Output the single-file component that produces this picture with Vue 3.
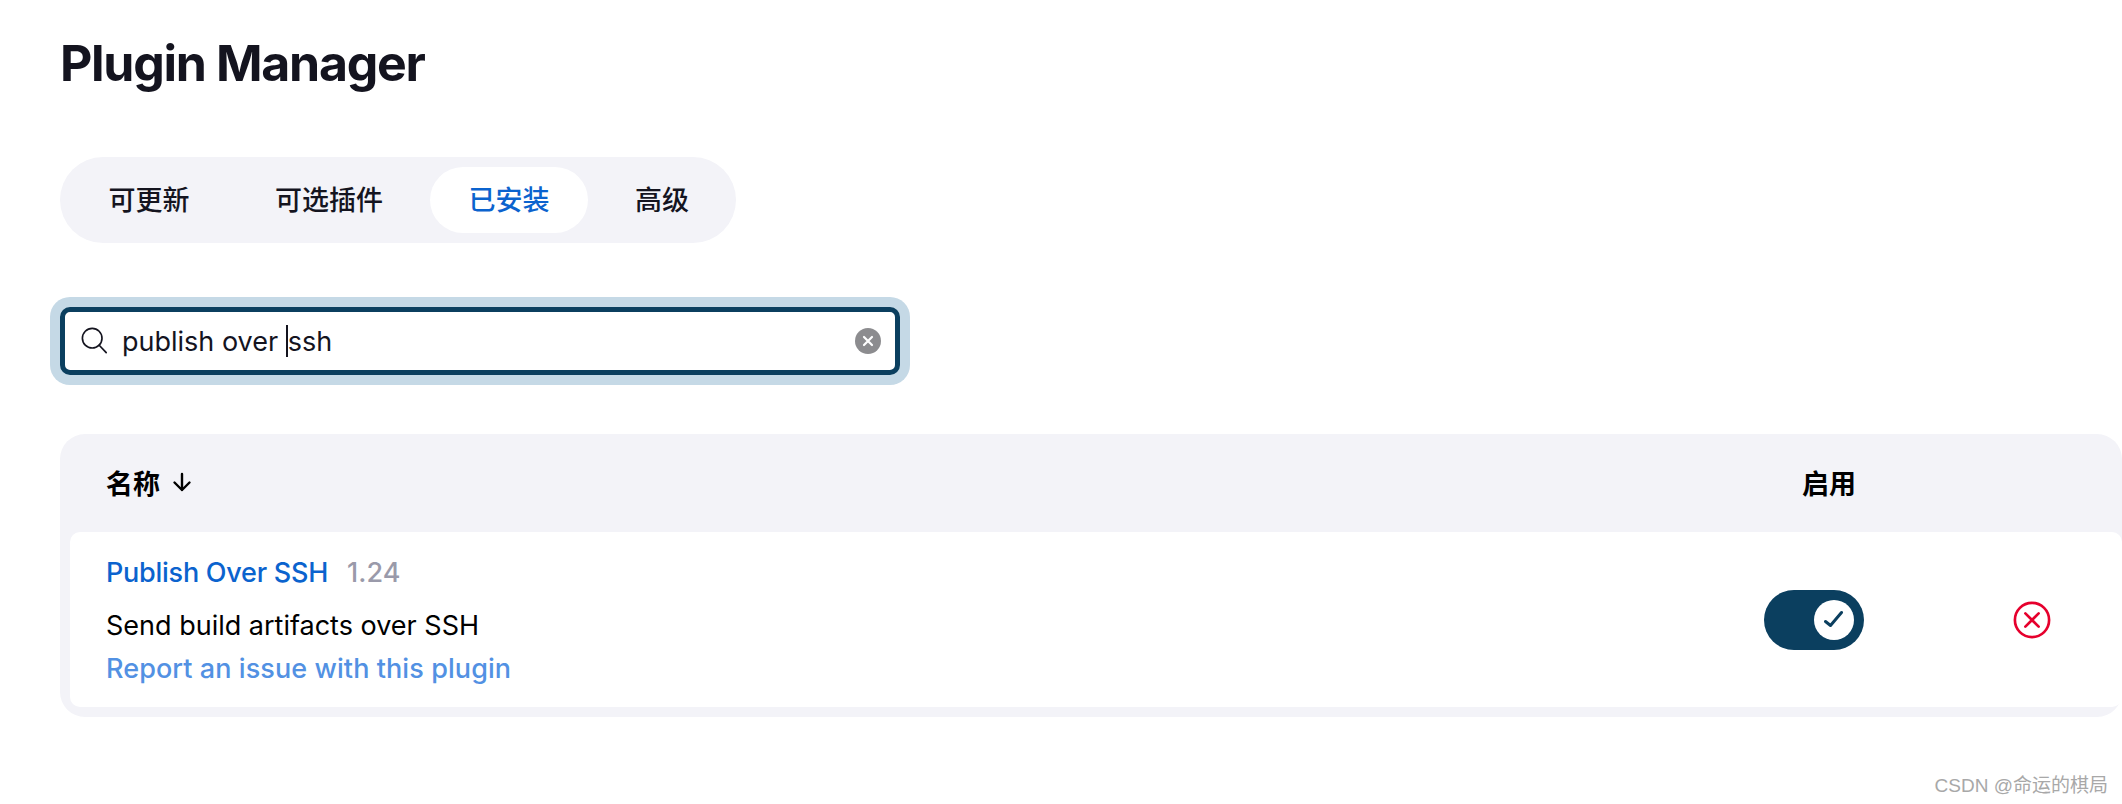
<template>
  <div class="page">
    <h1 class="title">Plugin Manager</h1>

    <div class="tabs">
      <a v-for="tab in tabs" :key="tab" class="tab" :class="{ active: tab === activeTab }">{{ tab }}</a>
    </div>

    <div class="search">
      <svg class="search-icon" viewBox="0 0 30 30" fill="none" stroke="#14141f" stroke-width="1.800" stroke-linecap="round">
        <circle cx="12" cy="12" r="10.500" />
        <path d="M19.500 19.500l7.500 8" />
      </svg>
      <div class="search-text">publish over <span class="caret"></span>ssh</div>
      <span class="clear">
        <svg viewBox="0 0 12 12" fill="none" stroke="#fff" stroke-width="2.200" stroke-linecap="round">
          <path d="M2 2l8 8M10 2l-8 8" />
        </svg>
      </span>
    </div>

    <div class="table">
      <div class="thead">
        <div class="th-name">
          名称
          <svg class="sort" viewBox="0 0 20 20" fill="none" stroke="#000" stroke-width="2.400" stroke-linecap="round" stroke-linejoin="round">
            <path d="M10 2v16M2.500 10.500l7.500 7.500 7.500-7.500" />
          </svg>
        </div>
        <div class="th-enabled">启用</div>
      </div>
      <div class="row">
        <div class="info">
          <div class="name-line">
            <a class="plugin-name">Publish Over SSH</a>
            <span class="version">1.24</span>
          </div>
          <div class="desc">Send build artifacts over SSH</div>
          <a class="report">Report an issue with this plugin</a>
        </div>
        <div class="toggle">
          <span class="knob">
            <svg viewBox="0 0 20 20" fill="none" stroke="#0b3f5f" stroke-width="3" stroke-linecap="round" stroke-linejoin="round">
              <path d="M1.500 11.500l5 4 11-13" />
            </svg>
          </span>
        </div>
        <svg class="remove" viewBox="0 0 40 40" fill="none" stroke="#e6002d" stroke-width="2.800" stroke-linecap="round">
          <circle cx="20" cy="20" r="18" />
          <path d="M13 13l14 14M27 13l-14 14" />
        </svg>
      </div>
    </div>

    <div class="watermark">CSDN @命运的棋局</div>
  </div>
</template>

<script setup>
const tabs = ['可更新', '可选插件', '已安装', '高级']
const activeTab = '已安装'
</script>

<style>
html, body {
  background: #fff;
  overflow: hidden;
}
</style>

<style scoped>
.page {
  position: relative;
  width: 2122px;
  height: 804px;
  padding: 32px 0 0 60px;
  box-sizing: border-box;
  overflow: hidden;
  font-family: Inter, "Noto Sans CJK SC", sans-serif;
  color: #000;
}

.title {
  margin: 0 0 62px;
  font-size: 50px;
  line-height: 63px;
  font-weight: 700;
  color: #14141f;
  letter-spacing: -1.300px;
}

.tabs {
  display: inline-flex;
  gap: 8.500px;
  padding: 10px 8px 10px 10px;
  height: 86px;
  box-sizing: border-box;
  background: #f3f3f8;
  border-radius: 43px;
}

.tab {
  padding: 0 38.500px;
  border-radius: 33px;
  font-size: 27px;
  font-weight: 500;
  line-height: 68px;
  height: 66px;
  color: #14141f;
}
.tab.active {
  background: #fff;
  color: #0b63ce;
}

.search {
  display: flex;
  align-items: center;
  width: 840px;
  height: 68px;
  margin-top: 64px;
  padding: 0 14px 0 16px;
  box-sizing: border-box;
  background: #fff;
  border: 5px solid #0b3f5f;
  border-radius: 10px;
  box-shadow: 0 0 0 10px #c5d9e6;
}

.search-icon {
  width: 28px;
  height: 28px;
  flex: none;
}

.search-text {
  flex: 1;
  margin-left: 13px;
  font-size: 27px;
  white-space: pre;
  color: #14141f;
}

.caret {
  display: inline-block;
  width: 2px;
  height: 32px;
  margin-bottom: -6px;
  background: #14141f;
}

.clear {
  display: flex;
  align-items: center;
  justify-content: center;
  width: 26px;
  height: 26px;
  border-radius: 50%;
  background: #8c8c8f;
}
.clear svg {
  width: 12px;
  height: 12px;
}

.table {
  width: 2062px;
  height: 283px;
  margin-top: 59px;
  padding: 0 0 10px 10px;
  box-sizing: border-box;
  background: #f3f3f8;
  border-radius: 25px;
}

.thead {
  display: flex;
  align-items: center;
  justify-content: space-between;
  height: 96px;
  margin-bottom: 2px;
  padding-left: 36px;
  font-size: 27px;
  font-weight: 600;
}

.th-name {
  display: flex;
  align-items: center;
  gap: 12px;
}

.sort {
  width: 20px;
  height: 20px;
}

.th-enabled {
  margin-right: 266px;
}

.row {
  display: flex;
  align-items: center;
  height: 175px;
  padding-left: 36px;
  background: #fff;
  border-radius: 10px;
}

.info {
  flex: 1;
  font-size: 27px;
}

.name-line {
  display: flex;
  gap: 19px;
  margin-top: 2px;
  margin-bottom: 17px;
  line-height: 36px;
}

.plugin-name {
  color: #0b63ce;
  font-weight: 500;
  letter-spacing: -.25px;
}

.version {
  color: #9a9aaa;
  font-weight: 500;
}

.desc {
  line-height: 36px;
  margin-bottom: 7px;
}

.report {
  display: block;
  line-height: 36px;
  font-weight: 500;
  letter-spacing: .08px;
  color: #5291e3;
}

.toggle {
  display: flex;
  align-items: center;
  justify-content: flex-end;
  width: 100px;
  height: 60px;
  padding: 0 10px;
  box-sizing: border-box;
  background: #0b3f5f;
  border-radius: 30px;
}

.knob {
  display: flex;
  align-items: center;
  justify-content: center;
  width: 40px;
  height: 40px;
  border-radius: 50%;
  background: #fff;
}
.knob svg {
  width: 20px;
  height: 20px;
}

.remove {
  width: 38px;
  height: 38px;
  margin: 0 71px 0 149px;
}

.watermark {
  position: absolute;
  right: 14px;
  top: 774px;
  font-family: "Liberation Sans", "Noto Sans CJK SC", sans-serif;
  font-size: 19px;
  line-height: 24px;
  color: #a8a8a8;
}
</style>
